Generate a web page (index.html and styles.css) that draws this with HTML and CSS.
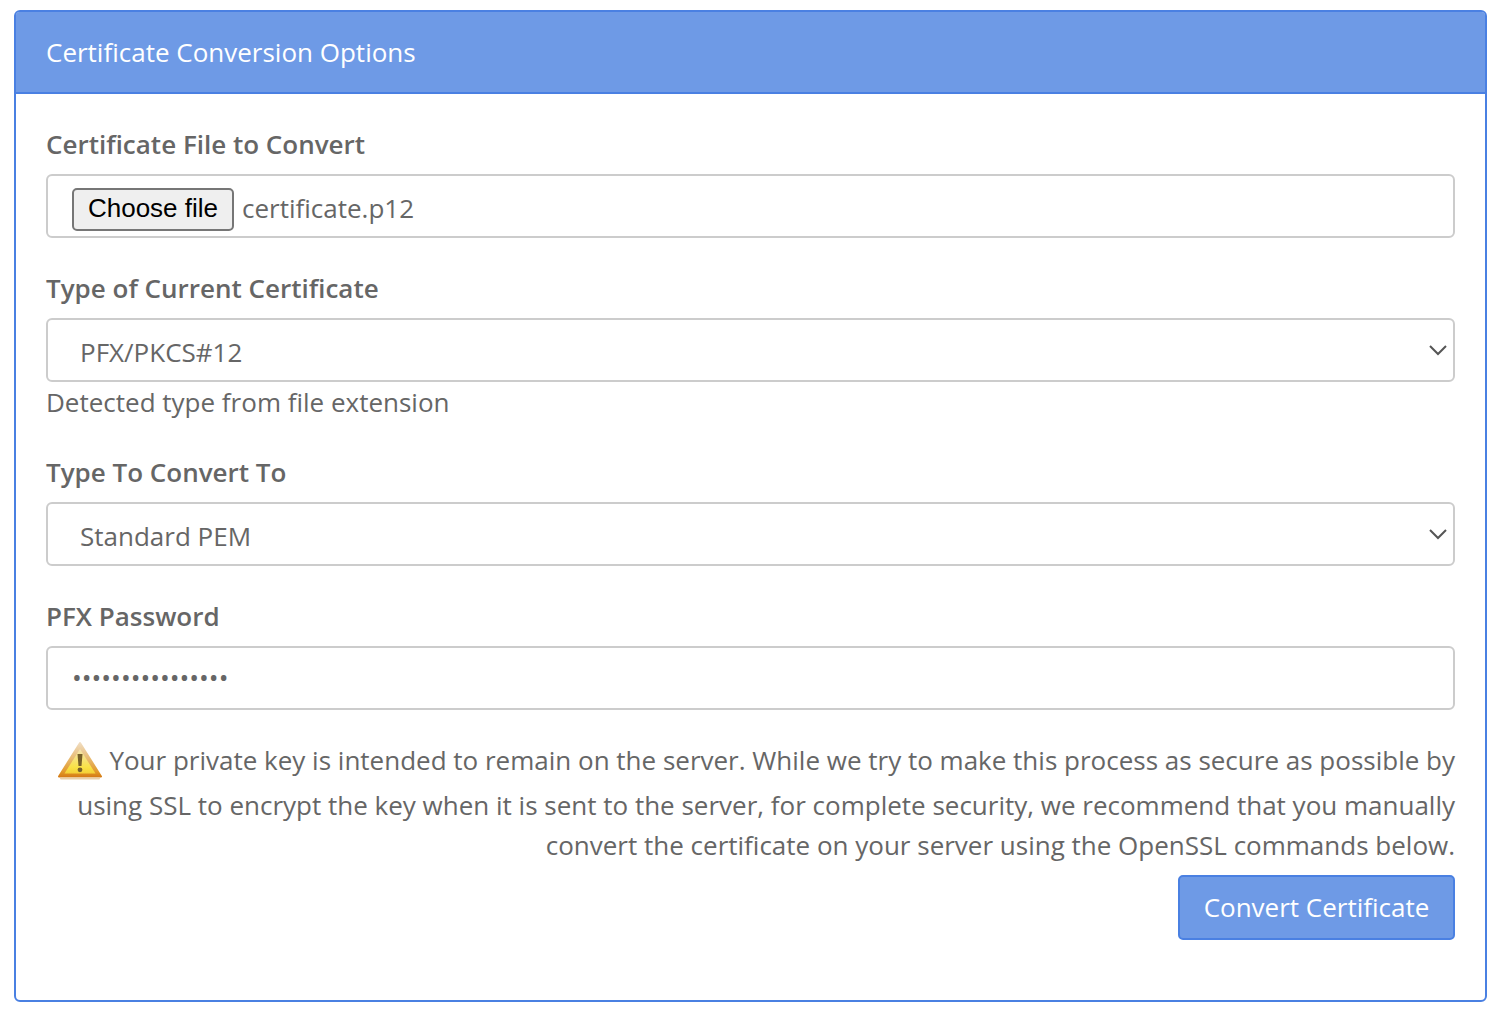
FILE: index.html
```html
<!DOCTYPE html>
<html lang="en">
<head>
<meta charset="utf-8">
<title>Certificate Conversion Options</title>
<link rel="stylesheet" href="styles.css">
</head>
<body>
<form class="panel">
  <h2 class="panel-heading">Certificate Conversion Options</h2>
  <div class="panel-body">
    <div class="form-group">
      <label class="field-label">Certificate File to Convert</label>
      <div class="form-control file-control">
        <button type="button" class="file-button">Choose file</button>
        <span class="file-name">certificate.p12</span>
      </div>
    </div>
    <div class="form-group">
      <label class="field-label" for="current">Type of Current Certificate</label>
      <div class="select-wrap">
        <select id="current" class="form-control select-control"><option>PFX/PKCS#12</option></select>
        <svg class="chevron" viewBox="0 0 18 12" aria-hidden="true"><path d="M1 2l8 8 8-8" fill="none" stroke="#555" stroke-width="2"/></svg>
      </div>
      <p class="help-text">Detected type from file extension</p>
    </div>
    <div class="form-group">
      <label class="field-label" for="target">Type To Convert To</label>
      <div class="select-wrap">
        <select id="target" class="form-control select-control"><option>Standard PEM</option></select>
        <svg class="chevron" viewBox="0 0 18 12" aria-hidden="true"><path d="M1 2l8 8 8-8" fill="none" stroke="#555" stroke-width="2"/></svg>
      </div>
    </div>
    <div class="form-group">
      <label class="field-label" for="password">PFX Password</label>
      <input id="password" class="form-control password-control" type="password" value="aaaaaaaaaaaaaaaa">
    </div>
    <p class="notice">
      <svg class="warning" viewBox="0 0 46 40" aria-hidden="true">
        <defs>
          <linearGradient id="warnFill" x1="0" y1="0" x2="0" y2="1">
            <stop offset="0" stop-color="#f3e3b4"/>
            <stop offset="0.4" stop-color="#f6e27a"/>
            <stop offset="0.75" stop-color="#f9e246"/>
            <stop offset="1" stop-color="#f4cf36"/>
          </linearGradient>
          <linearGradient id="warnEdge" x1="0" y1="0" x2="0" y2="1">
            <stop offset="0" stop-color="#f0dcc0"/>
            <stop offset="0.45" stop-color="#e8bb72"/>
            <stop offset="0.85" stop-color="#e29a2c"/>
            <stop offset="1" stop-color="#d67d16"/>
          </linearGradient>
          <filter id="warnSoft" x="-10%" y="-10%" width="120%" height="120%">
            <feGaussianBlur stdDeviation="0.6"/>
          </filter>
        </defs>
        <g filter="url(#warnSoft)">
          <path d="M23 2L44 35.500H2Z" fill="url(#warnEdge)" stroke="url(#warnEdge)" stroke-width="2" stroke-linejoin="round"/>
          <path d="M23 8L38.500 32.500H7.500Z" fill="url(#warnFill)"/>
          <path d="M4 37.500H42" stroke="#e9cfa8" stroke-width="2" stroke-linecap="round"/>
          <path d="M20.500 13h5l-1 12h-3Z" fill="#77602a"/>
          <circle cx="23" cy="28.800" r="2.400" fill="#77602a"/>
        </g>
      </svg>
      Your private key is intended to remain on the server. While we try to make this process as secure as possible by using SSL to encrypt the key when it is sent to the server, for complete security, we recommend that you manually convert the certificate on your server using the OpenSSL commands below.
    </p>
    <div class="actions">
      <button type="button" class="primary-button">Convert Certificate</button>
    </div>
  </div>
</form>
</body>
</html>
```
FILE: styles.css
```css
* { box-sizing: border-box; }
html, body { margin: 0; background: #fff; }
body {
  padding: 10px 11px 16px 14px;
  font-family: "Open Sans", sans-serif;
  font-size: 26px;
  line-height: 40px;
  color: #666;
}
.panel {
  display: block;
  height: 992px;
  border: 2px solid #4a80e2;
  border-radius: 6px;
  background: #fff;
}
.panel-heading {
  margin: 0;
  height: 82px;
  padding: 0 30px;
  font-size: 26px;
  font-weight: 400;
  line-height: 80px;
  color: #fff;
  background: #6e9ae6;
  border-bottom: 2px solid #4a80e2;
  border-radius: 3px 3px 0 0;
}
.panel-body { padding: 30px; }
.form-group { margin-bottom: 30px; }
.field-label {
  display: block;
  margin-bottom: 10px;
  font-weight: 600;
}
.form-control {
  display: block;
  width: 100%;
  height: 64px;
  padding: 10px 24px;
  border: 2px solid #ccc;
  border-radius: 6px;
  background: #fff;
  font: inherit;
  color: #666;
}
.file-control {
  display: flex;
  align-items: center;
  padding: 0 24px;
}
.file-button {
  width: 162px;
  height: 43px;
  margin: 6px 8px 0 0;
  padding: 0 0 2px;
  border: 2px solid #767676;
  border-radius: 5px;
  background: #efefef;
  font-family: "Liberation Sans", Arial, sans-serif;
  font-size: 26px;
  line-height: 1;
  color: #000;
}
.file-name { margin-top: 4px; }
.select-wrap { position: relative; }
.select-control {
  appearance: none;
  -webkit-appearance: none;
  padding: 4px 60px 0 32px;
}
.chevron {
  position: absolute;
  top: 26px;
  right: 8px;
  width: 18px;
  height: 12px;
  pointer-events: none;
}
.help-text { margin: 0; }
.password-control {
  padding-bottom: 12px;
  outline: none;
}
.notice {
  margin: 0 0 10px;
  text-align: right;
}
.warning {
  width: 46px;
  height: 40px;
  margin-bottom: 4px;
  vertical-align: middle;
}
.actions { display: flex; justify-content: flex-end; }
.primary-button {
  width: 277px;
  height: 65px;
  padding: 0 0 2px;
  border: 2px solid #4a80e2;
  border-radius: 5px;
  background: #6e9ae6;
  font: inherit;
  color: #fff;
}
```
